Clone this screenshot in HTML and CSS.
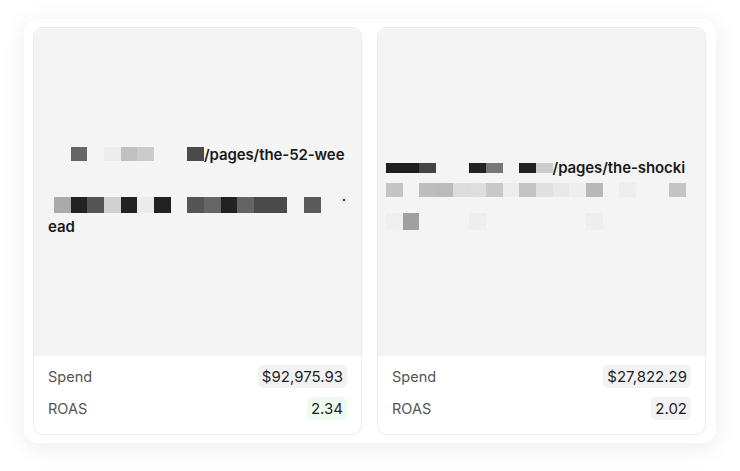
FILE: index.html
```html
<!DOCTYPE html>
<html>
<head>
<meta charset="utf-8">
<link rel="stylesheet" href="styles.css">
</head>
<body>
<div class="panel">
  <div class="card">
    <div class="preview preview-a">
      <div class="row row1">
        <span class="tile"></span><span class="tile" style="background:#666"></span><span class="tile"></span><span class="tile" style="background:#ececec"></span><span class="tile" style="background:#c0c0c0"></span><span class="tile" style="background:#cbcbcb"></span><span class="tile"></span><span class="tile"></span><span class="tile" style="background:#4a4a4a"></span><span class="txt">/pages/the-52-wee</span>
      </div>
      <div class="row row2">
        <span class="tile" style="background:#aaa"></span><span class="tile" style="background:#222"></span><span class="tile" style="background:#555"></span><span class="tile" style="background:#d0d0d0"></span><span class="tile" style="background:#222"></span><span class="tile" style="background:#ebebeb"></span><span class="tile" style="background:#222"></span><span class="tile"></span><span class="tile" style="background:#555"></span><span class="tile" style="background:#666"></span><span class="tile" style="background:#222"></span><span class="tile" style="background:#646464"></span><span class="tile" style="background:#4a4a4a"></span><span class="tile" style="background:#4a4a4a"></span><span class="tile"></span><span class="tile" style="background:#5a5a5a"></span><span class="dot"></span>
      </div>
      <div class="row row3"><span class="txt">ead</span></div>
    </div>
    <div class="stats">
      <div class="stat"><span class="label">Spend</span><span class="value">$92,975.93</span></div>
      <div class="stat"><span class="label">ROAS</span><span class="value good">2.34</span></div>
    </div>
  </div>
  <div class="card">
    <div class="preview preview-b">
      <div class="row rowb1">
        <span class="tile" style="background:#1e1e1e"></span><span class="tile" style="background:#1e1e1e"></span><span class="tile" style="background:#444"></span><span class="tile"></span><span class="tile"></span><span class="tile" style="background:#222"></span><span class="tile" style="background:#777"></span><span class="tile"></span><span class="tile" style="background:#222"></span><span class="tile" style="background:#cccccc"></span><span class="txt">/pages/the-shocki</span>
      </div>
      <div class="row rowb2">
        <span class="tile" style="background:#c4c4c4"></span><span class="tile"></span><span class="tile" style="background:#bdbdbd"></span><span class="tile" style="background:#bbb"></span><span class="tile" style="background:#dcdcdc"></span><span class="tile" style="background:#dedede"></span><span class="tile" style="background:#c8c8c8"></span><span class="tile" style="background:#ececec"></span><span class="tile" style="background:#c4c4c4"></span><span class="tile" style="background:#e0e0e0"></span><span class="tile" style="background:#e8e8e8"></span><span class="tile" style="background:#eeeeee"></span><span class="tile" style="background:#b8b8b8"></span><span class="tile"></span><span class="tile" style="background:#eeeeee"></span><span class="tile"></span><span class="tile"></span><span class="tile" style="background:#c4c4c4"></span>
      </div>
      <div class="row rowb3">
        <span class="tile" style="background:#efefef"></span><span class="tile" style="background:#a0a0a0"></span><span class="tile"></span><span class="tile"></span><span class="tile"></span><span class="tile" style="background:#eeeeee"></span><span class="tile"></span><span class="tile"></span><span class="tile"></span><span class="tile"></span><span class="tile"></span><span class="tile"></span><span class="tile" style="background:#eeeeee"></span>
      </div>
    </div>
    <div class="stats">
      <div class="stat"><span class="label">Spend</span><span class="value">$27,822.29</span></div>
      <div class="stat"><span class="label">ROAS</span><span class="value">2.02</span></div>
    </div>
  </div>
</div>
</body>
</html>
```

FILE: styles.css
```css
* { box-sizing: border-box; }
html, body { margin: 0; padding: 0; background: #ffffff; }
body {
  font-family: Inter, "Noto Sans", "Liberation Sans", sans-serif;
  color: #1a1a1a;
  width: 740px;
  height: 471px;
  overflow: hidden;
}
.panel {
  margin: 19px 0 0 24px;
  width: 692px;
  height: 424px;
  background: #fff;
  border-radius: 14px;
  box-shadow: 0 4px 26px rgba(0, 0, 0, 0.08);
  padding: 8px 10px 8px 9px;
  display: flex;
  gap: 15px;
}
.card {
  flex: 1 1 0;
  border: 1px solid #ebebeb;
  border-radius: 10px;
  overflow: hidden;
  display: flex;
  flex-direction: column;
  background: #fff;
}
.preview {
  height: 328px;
  background: #f4f4f4;
  display: flex;
  flex-direction: column;
}
.preview-a { padding: 117px 0 0 20px; }
.preview-b { padding: 130px 0 0 8px; }
.row {
  display: flex;
  align-items: flex-start;
  white-space: nowrap;
}
.tile {
  flex: 0 0 16.667px;
  height: 14px;
}
.txt {
  font-size: 15px;
  font-weight: 600;
  line-height: 20px;
  color: #1a1a1a;
  letter-spacing: -0.1px;
}
.row1 { height: 20px; }
.row1 .tile { margin-top: 2px; height: 14px; }
.row2 { height: 20px; margin-top: 30px; }
.row2 .tile { margin-top: 2px; height: 16px; }
.dot { width: 2px; height: 2px; background: #333; margin: 4px 0 0 22px; }
.row3 { height: 22px; margin-left: -6px; padding-top: 2px; }
.rowb1 { height: 20px; }
.rowb1 .tile { margin-top: 5px; height: 10px; }
.rowb2 { height: 20px; }
.rowb2 .tile { margin-top: 5px; height: 14px; }
.rowb3 { height: 33px; }
.rowb3 .tile { margin-top: 15px; height: 17px; }
.stats {
  flex: 1;
  padding: 9px 14px 0 14px;
  display: flex;
  flex-direction: column;
  gap: 9px;
}
.stat {
  display: flex;
  justify-content: space-between;
  align-items: center;
  height: 23px;
}
.label {
  font-size: 14.5px;
  color: #555;
}
.value {
  font-size: 15px;
  color: #1f1f1f;
  background: #f2f2f2;
  border-radius: 5px;
  padding: 0 4px;
  line-height: 23px;
}
.value.good { background: #effaef; }
```
